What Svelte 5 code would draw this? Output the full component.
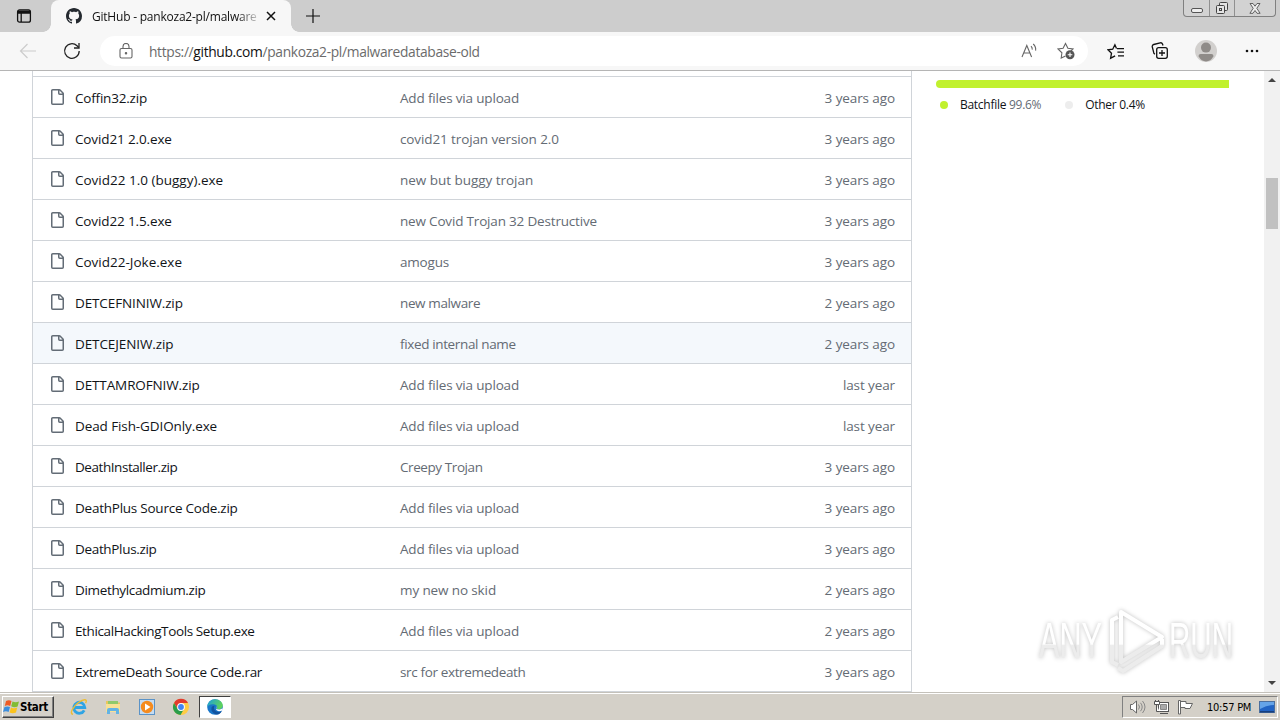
<script lang="ts">
    // track: letter spacing in px for the name, messageTrack: same for the message
    const files = [
        { name: 'Coffin32.zip', track: -0.2, message: 'Add files via upload', messageTrack: -0.17, age: '3 years ago' },
        { name: 'Covid21 2.0.exe', track: -0.13, message: 'covid21 trojan version 2.0', messageTrack: -0.11, age: '3 years ago' },
        { name: 'Covid22 1.0 (buggy).exe', track: 0, message: 'new but buggy trojan', messageTrack: -0.03, age: '3 years ago' },
        { name: 'Covid22 1.5.exe', track: -0.13, message: 'new Covid Trojan 32 Destructive', messageTrack: -0.18, age: '3 years ago' },
        { name: 'Covid22-Joke.exe', track: 0, message: 'amogus', messageTrack: -0.2, age: '3 years ago' },
        { name: 'DETCEFNINIW.zip', track: -0.12, message: 'new malware', messageTrack: -0.38, age: '2 years ago' },
        { name: 'DETCEJENIW.zip', track: -0.1, message: 'fixed internal name', messageTrack: -0.36, age: '2 years ago' },
        { name: 'DETTAMROFNIW.zip', track: -0.12, message: 'Add files via upload', messageTrack: -0.17, age: 'last year' },
        { name: 'Dead Fish-GDIOnly.exe', track: -0.1, message: 'Add files via upload', messageTrack: -0.17, age: 'last year' },
        { name: 'DeathInstaller.zip', track: -0.44, message: 'Creepy Trojan', messageTrack: -0.42, age: '3 years ago' },
        { name: 'DeathPlus Source Code.zip', track: -0.24, message: 'Add files via upload', messageTrack: -0.17, age: '3 years ago' },
        { name: 'DeathPlus.zip', track: -0.33, message: 'Add files via upload', messageTrack: -0.17, age: '3 years ago' },
        { name: 'Dimethylcadmium.zip', track: -0.34, message: 'my new no skid', messageTrack: -0.12, age: '2 years ago' },
        { name: 'EthicalHackingTools Setup.exe', track: -0.38, message: 'Add files via upload', messageTrack: -0.17, age: '2 years ago' },
        { name: 'ExtremeDeath Source Code.rar', track: -0.3, message: 'src for extremedeath', messageTrack: -0.36, age: '3 years ago' }
    ];

    let selected = $state(6);
</script>

<div class="screen">
    <div class="tabstrip">
        <button class="tab-actions" aria-label="Tab actions">
            <svg width="16" height="16" viewBox="0 0 16 16" fill="none" stroke="#111" stroke-width="1.3">
                <rect x="1.6" y="1.8" width="12.8" height="12.4" rx="2" />
                <path d="M2 3.4h12M2 4.8h12" stroke-width="1.8" />
                <path d="M5.2 5v9" />
            </svg>
        </button>
        <div class="tab">
            <svg class="github" width="16" height="16" viewBox="0 0 16 16" fill="#24292f">
                <path d="M8 0C3.58 0 0 3.58 0 8c0 3.54 2.29 6.53 5.47 7.59.4.07.55-.17.55-.38 0-.19-.01-.82-.01-1.49-2.01.37-2.53-.49-2.69-.94-.09-.23-.48-.94-.82-1.13-.28-.15-.68-.52-.01-.53.63-.01 1.08.58 1.23.82.72 1.21 1.87.87 2.33.66.07-.52.28-.87.51-1.07-1.78-.2-3.64-.89-3.64-3.95 0-.87.31-1.59.82-2.15-.08-.2-.36-1.02.08-2.12 0 0 .67-.21 2.2.82.64-.18 1.32-.27 2-.27s1.36.09 2 .27c1.53-1.04 2.2-.82 2.2-.82.44 1.1.16 1.92.08 2.12.51.56.82 1.27.82 2.15 0 3.07-1.87 3.75-3.65 3.95.29.25.54.73.54 1.48 0 1.07-.01 1.93-.01 2.2 0 .21.15.46.55.38A8.01 8.01 0 0 0 16 8c0-4.42-3.58-8-8-8z" />
            </svg>
            <span class="tab-title">GitHub - pankoza2-pl/malware</span>
            <svg class="tab-close" width="10" height="10" viewBox="0 0 10 10" stroke="#111" stroke-width="1.5">
                <path d="M1 1l8 8M9 1l-8 8" />
            </svg>
        </div>
        <svg class="new-tab" width="14" height="14" viewBox="0 0 14 14" stroke="#111" stroke-width="1.2">
            <path d="M7 0v14M0 7h14" />
        </svg>
        <div class="window-controls">
            <span class="control">
                <svg width="12" height="5" viewBox="0 0 12 5"><rect x=".5" y=".5" width="11" height="4" rx="1.5" fill="#eee" stroke="#555" /></svg>
            </span>
            <span class="control restore">
                <svg width="14" height="13" viewBox="0 0 14 13" fill="#e4e4e4" stroke="#444">
                    <rect x="4.5" y=".5" width="8" height="8" rx="1" />
                    <rect x="1.5" y="3.5" width="8" height="8" rx="1" />
                    <rect x="4.5" y="6.5" width="2" height="2" />
                </svg>
            </span>
            <span class="control close">
                <svg width="12" height="11" viewBox="0 0 12 11" fill="#eee" stroke="#555" stroke-width=".9">
                    <path d="M1 .5h3l2 2.7L8 .5h3L7.8 5.3l3.3 5H8L6 7.5l-2 2.8H.9l3.3-5z" />
                </svg>
            </span>
        </div>
    </div>

    <div class="toolbar">
        <svg class="back" width="18" height="16" viewBox="0 0 18 16" fill="none" stroke="#ccc" stroke-width="1.2">
            <path d="M17 8H2M8.5 1L1.5 8l7 7" />
        </svg>
        <svg class="reload" width="18" height="18" viewBox="0 0 18 18" fill="none" stroke="#222" stroke-width="1.3">
            <path d="M16.2 9A7.3 7.3 0 1 1 14 3.8L15.8 5.5" />
            <path d="M16 1v5h-5" />
        </svg>
        <div class="address">
            <svg class="lock" width="14" height="16" viewBox="0 0 14 16" fill="none" stroke="#666" stroke-width="1.1">
                <rect x="1" y="5.5" width="12" height="9.5" rx="1.5" />
                <path d="M4 5.5V3.4a3 3 0 0 1 6 0v2.1" />
                <circle cx="7" cy="10.2" r=".7" fill="#666" />
            </svg>
            <span class="url">https://<b>github.com</b>/pankoza2-pl/malwaredatabase-old</span>
            <svg class="read" width="17" height="16" viewBox="0 0 17 16" fill="none" stroke="#666" stroke-width="1.1">
                <path d="M1 14L5.8 2.5 10.6 14M2.8 10h6M10 3.2q1.5 1.5 1.2 3.4M12.2 1q3 2.8 2.4 6.6" />
            </svg>
            <svg class="favorite" width="18" height="18" viewBox="0 0 18 18" fill="none" stroke="#666" stroke-width="1.1">
                <path d="M8.5 14l-4.3 2 .7-5.2L1 7l5.1-.8L8.5 1.4l2.4 4.8L16 7l-2 2" />
                <circle cx="13" cy="12.8" r="4.5" fill="#555" stroke="none" />
                <path d="M13 10.5v4.6M10.7 12.8h4.6" stroke="#fff" />
            </svg>
        </div>
        <svg class="favorites" width="18" height="17" viewBox="0 0 18 17" fill="none" stroke="#111" stroke-width="1.3">
            <path d="M9.5 5.5L7.9 1.7 5.7 6.2 1 6.8l3.5 3.4-.9 5 4.5-2.3M10 5.6h7M10.4 9.2H17M11 12.8h6" />
        </svg>
        <svg class="collections" width="18" height="18" viewBox="0 0 18 18" fill="none" stroke="#111" stroke-width="1.3">
            <path d="M4 12.2A2.2 2.2 0 0 1 2.6 10L1.3 5a2 2 0 0 1 1.4-2.5l6.5-1.7A2 2 0 0 1 11.5 2l.5 1.5" />
            <rect x="5.7" y="5.7" width="10.6" height="10.6" rx="2" />
            <path d="M11 8v6M8 11h6" />
        </svg>
        <svg class="profile" width="22" height="22" viewBox="0 0 22 22">
            <circle cx="11" cy="11" r="11" fill="#d2d0ce" />
            <circle cx="11" cy="7.6" r="5" fill="#8f8b88" />
            <path d="M3.5 16.2q0-2.2 2.2-2.2h10.6q2.2 0 2.2 2.2Q15.5 21.4 11 21.4t-7.5-5.2" fill="#8f8b88" />
        </svg>
        <svg class="more" width="14" height="4" viewBox="0 0 14 4" fill="#111">
            <circle cx="2" cy="2" r="1.3" /><circle cx="7" cy="2" r="1.3" /><circle cx="12" cy="2" r="1.3" />
        </svg>
    </div>

    <div class="page">
        <div class="files">
            {#each files as file, i}
                <div class="row" class:selected={selected === i}>
                    <svg width="16" height="16" viewBox="0 0 16 16" fill="#636c76">
                        <path fill-rule="evenodd" d="M2 1.75C2 .784 2.784 0 3.75 0h6.586c.464 0 .909.184 1.237.513l2.914 2.914c.329.328.513.773.513 1.237v9.586A1.75 1.75 0 0 1 13.25 16h-9.5A1.75 1.75 0 0 1 2 14.25Zm1.75-.25a.25.25 0 0 0-.25.25v12.5c0 .138.112.25.25.25h9.5a.25.25 0 0 0 .25-.25V6h-2.75A1.75 1.75 0 0 1 9 4.25V1.5Zm6.75.062V4.25c0 .138.112.25.25.25h2.688l-.011-.013-2.914-2.914-.013-.011Z" />
                    </svg>
                    <span class="name" style="letter-spacing: {file.track}px">{file.name}</span>
                    <span class="message" style="letter-spacing: {file.messageTrack}px">{file.message}</span>
                    <span class="age">{file.age}</span>
                </div>
            {/each}
        </div>
        <div class="sidebar">
            <div class="language-bar"></div>
            <div class="languages">
                <i class="dot"></i><span class="language">Batchfile <em>99.6%</em></span>
                <i class="dot other"></i><span class="language">Other 0.4%</span>
            </div>
        </div>
        <div class="scrollbar">
            <i class="arrow up"></i>
            <div class="thumb"></div>
            <i class="arrow down"></i>
        </div>
        <svg class="watermark" width="230" height="84" viewBox="0 0 230 84">
            <defs>
                <linearGradient id="fade" x1="0" y1="0" x2="0" y2="76" gradientUnits="userSpaceOnUse">
                    <stop offset=".54" stop-color="#fff" />
                    <stop offset=".56" stop-color="#ececec" />
                </linearGradient>
            </defs>
            <g fill="url(#fade)">
                <text x="8" y="55" textLength="63" lengthAdjust="spacingAndGlyphs">ANY</text>
                <text x="138" y="55" textLength="64" lengthAdjust="spacingAndGlyphs">RUN</text>
            </g>
            <g fill="none" stroke="url(#fade)" stroke-width="4" stroke-linejoin="round">
                <path d="M90 9L131 34 90 59z" />
                <path d="M87 14L81 17V59L87 62M87 65l5 3 39-25V36" />
            </g>
        </svg>
    </div>

    <div class="taskbar">
        <button class="start">
            <svg width="17" height="16" viewBox="0 0 17 16">
                <path d="M3 2Q6 .5 8.5 2L7.2 7Q4.5 5.5 1.8 7z" fill="#ef5b25" />
                <path d="M9.5 2.5Q12.5 4 16 2.5L14.6 7.5Q11.5 9 8.2 7.3z" fill="#82bc35" />
                <path d="M1.5 8Q4.5 6.8 7 8L5.6 13Q3 11.6 0 13z" fill="#3c8ede" />
                <path d="M8 8.4Q11 10 14.2 8.6L13 13.4Q9.6 15 6.6 13.4z" fill="#fbc31d" />
            </svg>
            Start
        </button>
        <div class="launchers">
            <span class="launcher">
                <svg width="18" height="18" viewBox="0 0 18 18" fill="none">
                    <path d="M14.2 12.3A5.5 5.5 0 1 1 14.8 9.5H5" stroke="#2fa4e4" stroke-width="2.8" />
                    <path d="M3 16.3C-1 16 3 8.5 8.5 4.5S18 1 15.6 5.2" stroke="#edbd32" stroke-width="1.4" />
                </svg>
            </span>
            <span class="launcher">
                <svg width="18" height="18" viewBox="0 0 18 18">
                    <path d="M2 3h5l1 1.5h8V14H2z" fill="#eac65c" />
                    <path d="M4 3h10v3H4z" fill="#8fc96a" />
                    <path d="M2 6h14v8H2z" fill="#f8e195" />
                    <path d="M3 16v-4q0-2 2-2h8q2 0 2 2v4h-3v-3H6v3z" fill="#63b3e4" />
                </svg>
            </span>
            <span class="launcher">
                <svg width="18" height="18" viewBox="0 0 18 18">
                    <rect x="1.5" y="1.5" width="15" height="15" fill="#c5dcf2" stroke="#5b93c7" />
                    <circle cx="9" cy="9" r="6.2" fill="#f58b1e" />
                    <path d="M7 5.5L12.5 9 7 12.5z" fill="#fff" />
                </svg>
            </span>
            <span class="launcher">
                <svg width="18" height="18" viewBox="0 0 18 18">
                    <circle cx="9" cy="9" r="8" fill="#fc4" />
                    <path d="M2 5A8 8 0 0 1 16 5H9L5.8 11z" fill="#e23b2e" />
                    <path d="M2 5A8 8 0 0 0 8.5 17L12 11 5.7 11z" fill="#2a9d4b" />
                    <circle cx="9" cy="9" r="3.9" fill="#fff" />
                    <circle cx="9" cy="9" r="2.9" fill="#4285f4" />
                </svg>
            </span>
            <span class="launcher active">
                <svg width="18" height="18" viewBox="0 0 18 18">
                    <defs>
                        <linearGradient id="edge" x1="0" y1="0" x2="1" y2=".4">
                            <stop offset="0" stop-color="#1a9de0" />
                            <stop offset="1" stop-color="#5fd35b" />
                        </linearGradient>
                    </defs>
                    <circle cx="9" cy="9" r="7.8" fill="#1976c9" />
                    <path d="M1.2 9C1.5 4 5 1.2 9 1.2c4.7 0 7.8 3.3 7.8 6.4 0 3-3.3 4.6-6 3.3C12 8.5 10.5 6.3 7.5 6.2 4 6 1.8 7.5 1.2 9z" fill="url(#edge)" />
                    <path d="M10.8 7.8Q8.5 11.8 12 13q2.5.8 4.3-.8Q18 9 14 11.5q-3.5.2-4-1.1z" fill="#fff" />
                    <path d="M5.5 9.5Q4.5 14 10 16.5q4 .2 6-3.6-3.5 2-6.5 0Q7 11 8.5 7.8 6 8 5.5 9.5z" fill="#12539f" />
                </svg>
            </span>
        </div>
        <div class="tray">
            <svg width="17" height="16" viewBox="0 0 17 16" fill="none" stroke="#666">
                <path d="M1.5 5.5h2L7.5 2v12l-4-3.5h-2z" fill="#fff" />
                <path d="M9.5 5.5q2 2.5 0 5M11.5 3.8q3.4 4.2 0 8.4M13.5 2q5 6 0 12" stroke="#888" />
            </svg>
            <svg width="17" height="16" viewBox="0 0 17 16" fill="#fff" stroke="#555">
                <rect x="5.5" y="3.5" width="10" height="9" />
                <path d="M7.5 5.5h6v5h-6z" fill="#aaa" stroke="#888" />
                <path d="M7 14.5h8M1.5 2.5h5v3h-5zM3.5 5.5v7h3M2.5 1v2M5.5 1v2" />
            </svg>
            <svg width="17" height="16" viewBox="0 0 17 16" fill="#fff" stroke="#666">
                <path d="M1.5 1.5h2V15h-2zM3.5 2.5H9v2h6.5L13 9.5H8v-1H3.5z" />
            </svg>
            <span class="clock">10:57 PM</span>
            <svg width="16" height="14" viewBox="0 0 16 14">
                <rect x=".5" y="1.5" width="15" height="11" fill="#2264c4" stroke="#4b6f9e" />
                <path d="M1 2h14v3Q8 5 1 9z" fill="#65a4e8" />
                <path d="M1 11h14v1.5H1z" fill="#173f7e" />
            </svg>
        </div>
    </div>
</div>

<style>
    :global(body) {
        overflow: hidden;
    }
    .screen {
        width: 1280px;
        height: 720px;
        display: flex;
        flex-direction: column;
        overflow: hidden;
        background: #fff;
        color: #111418;
        font-family: "Open Sans", "Noto Sans", sans-serif;
        font-size: 13.5px;
    }
    svg {
        display: block;
        flex: none;
    }
    button {
        border: none;
        background: none;
        padding: 0;
    }

    /* tab strip */
    .tabstrip {
        height: 32px;
        flex: none;
        display: flex;
        align-items: center;
        background: #cdcdcd;
    }
    .tab-actions {
        width: 51px;
        padding-left: 16px;
    }
    .tab {
        position: relative;
        box-sizing: border-box;
        width: 240px;
        height: 32px;
        padding: 0 14px 0 15px;
        display: flex;
        align-items: center;
        background: #f7f7f7;
        border-radius: 8px 8px 0 0;
    }
    .tab::before,
    .tab::after {
        content: '';
        position: absolute;
        bottom: 0;
        width: 8px;
        height: 8px;
    }
    .tab::before {
        left: -8px;
        background: radial-gradient(circle at 0 0, transparent 7.5px, #f7f7f7 8px);
    }
    .tab::after {
        right: -8px;
        background: radial-gradient(circle at 100% 0, transparent 7.5px, #f7f7f7 8px);
    }
    .tab-title {
        width: 166px;
        margin-left: 10px;
        white-space: nowrap;
        color: #111;
        font-size: 12px;
        letter-spacing: -0.22px;
        mask-image: linear-gradient(to right, #000 145px, transparent 170px);
    }
    .tab-close {
        margin-left: 8px;
    }
    .new-tab {
        margin-left: 15px;
    }
    .window-controls {
        display: flex;
        align-self: flex-start;
        box-sizing: border-box;
        height: 17px;
        margin: 0 4px 0 auto;
        border: 1px solid #808080;
        border-top: none;
        border-radius: 0 0 4px 4px;
        background: #d2d2d2;
    }
    .control {
        display: flex;
        align-items: center;
        justify-content: center;
        width: 25px;
    }
    .control:first-child {
        padding-top: 4px;
        height: 12px;
    }
    .restore {
        box-sizing: border-box;
        width: 26px;
        border: solid #909090;
        border-width: 0 1px;
    }
    .close {
        width: 40px;
    }

    /* toolbar */
    .toolbar {
        height: 38px;
        flex: none;
        display: flex;
        align-items: center;
        background: #f7f7f7;
        border-bottom: 1px solid #b5b5b5;
    }
    .back {
        margin-left: 19px;
    }
    .reload {
        margin-left: 26px;
    }
    .address {
        box-sizing: border-box;
        width: 988px;
        height: 30px;
        margin-left: 19px;
        padding: 0 13px 0 19px;
        display: flex;
        align-items: center;
        background: #fff;
        border-radius: 15px;
    }
    .url {
        margin-left: 16px;
        color: #6b6b6b;
        font-size: 13.8px;
        letter-spacing: -0.34px;
    }
    .url b {
        color: #111;
        font-weight: 400;
    }
    .read {
        margin-left: auto;
    }
    .favorite {
        margin-left: 19px;
    }
    .favorites {
        margin-left: 19px;
    }
    .collections {
        margin-left: 26px;
    }
    .profile {
        margin-left: 26px;
    }
    .more {
        margin-left: 28px;
    }

    /* repository page */
    .page {
        position: relative;
        height: 621px;
        flex: none;
        display: flex;
        overflow: hidden;
    }
    .files {
        box-sizing: border-box;
        width: 880px;
        margin-left: 32px;
        padding-top: 5px;
        border: solid #d0d4d9;
        border-width: 0 1px;
    }
    .row {
        box-sizing: border-box;
        height: 41px;
        padding: 0 16px;
        display: flex;
        align-items: center;
        border-top: 1px solid #d0d4d9;
    }
    .row:last-child {
        height: 42px;
        border-bottom: 1px solid #d0d4d9;
    }
    .selected {
        background: #f4f8fc;
    }
    .name {
        width: 325px;
        margin-left: 10px;
        padding-top: 1px;
        white-space: nowrap;
    }
    .message,
    .age {
        padding-top: 1px;
        color: #646b74;
    }
    .age {
        margin-left: auto;
        letter-spacing: -0.1px;
    }
    .sidebar {
        width: 293px;
        margin-left: 24px;
        padding-top: 9px;
    }
    .language-bar {
        height: 8px;
        background: #c1f12e;
        border-radius: 4px 0 0 4px;
    }
    .languages {
        display: flex;
        align-items: center;
        margin-top: 8px;
        font-size: 12px;
        letter-spacing: -0.28px;
    }
    .dot {
        width: 8px;
        height: 8px;
        margin: 0 12px 0 4px;
        border-radius: 50%;
        background: #c1f12e;
    }
    .dot.other {
        margin-left: 24px;
        background: #ededed;
    }
    .language em {
        color: #646b74;
        font-style: normal;
    }
    .scrollbar {
        width: 16px;
        margin-left: auto;
        display: flex;
        flex-direction: column;
        align-items: center;
        background: #f1f1f1;
    }
    .arrow {
        width: 0;
        height: 0;
        border: solid transparent;
        border-width: 0 4px;
    }
    .up {
        margin-top: 7px;
        border-bottom: 4px solid #444;
    }
    .down {
        margin: auto 0 7px;
        border-top: 4px solid #444;
    }
    .thumb {
        width: 12px;
        height: 51px;
        margin-top: 96px;
        background: #c1c1c1;
    }
    .watermark {
        position: absolute;
        left: 1031px;
        top: 532px;
        overflow: visible;
        filter: drop-shadow(0 0 2px rgba(0, 0, 0, 0.25));
        font-family: "Liberation Sans Narrow", "Liberation Sans", sans-serif;
        font-size: 50px;
    }

    /* taskbar */
    .taskbar {
        box-sizing: border-box;
        height: 28px;
        flex: none;
        display: flex;
        align-items: center;
        padding-top: 1px;
        background: #d4d0c8;
        border-top: 1px solid #c4c1ba;
        box-shadow: inset 0 1px #fff;
        font-family: "DejaVu Sans Condensed", "DejaVu Sans", sans-serif;
    }
    .start {
        box-sizing: border-box;
        width: 52px;
        height: 22px;
        margin-left: 2px;
        display: flex;
        align-items: center;
        border: 1px solid;
        border-color: #fff #404040 #404040 #fff;
        box-shadow: inset -1px -1px #808080;
        background: #d4d0c8;
        color: #000;
        font-family: "DejaVu Sans Condensed", "DejaVu Sans", sans-serif;
        font-size: 11.5px;
        font-weight: 700;
        letter-spacing: -0.3px;
    }
    .launchers {
        display: flex;
        margin-left: 9px;
        gap: 2px;
    }
    .launcher {
        box-sizing: border-box;
        width: 32px;
        height: 22px;
        display: flex;
        align-items: center;
        justify-content: center;
    }
    .active {
        background: #fff;
        border: 1px solid;
        border-color: #404040 #fff #fff #404040;
    }
    .tray {
        box-sizing: border-box;
        width: 156px;
        height: 22px;
        margin: 0 2px 0 auto;
        padding-left: 6px;
        display: flex;
        align-items: center;
        gap: 7px;
        border: 1px solid;
        border-color: #808080 #fff #fff #808080;
    }
    .clock {
        margin: 0 1px 0 6px;
        color: #000;
        font-size: 11px;
        letter-spacing: -0.25px;
        white-space: nowrap;
    }
</style>
